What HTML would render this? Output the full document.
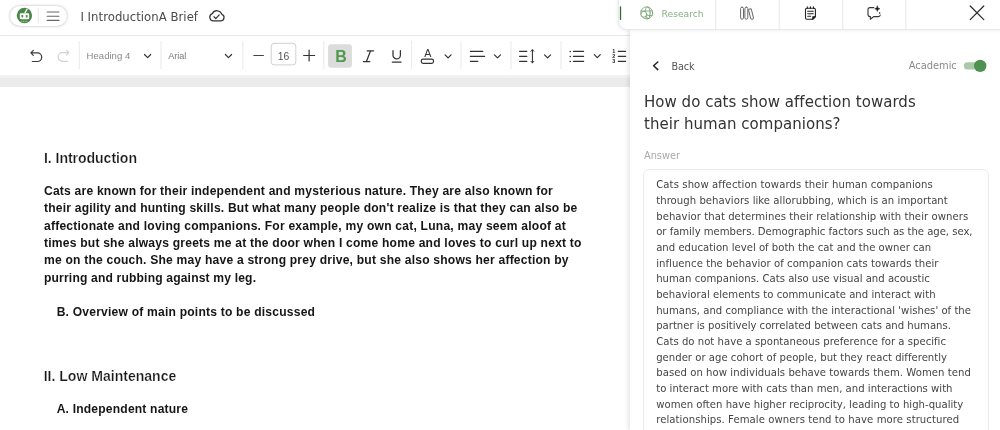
<!DOCTYPE html>
<html><head><meta charset="utf-8">
<style>
*{box-sizing:border-box;margin:0;padding:0}
html,body{width:1000px;height:430px;overflow:hidden;background:#fff;font-family:"Liberation Sans",sans-serif;}
.a{position:absolute}
.t{position:absolute;white-space:nowrap;line-height:normal}
#txt{position:absolute;left:0;top:0;width:1000px;height:430px;will-change:transform}
#top{position:absolute;left:0;top:0;width:1000px;height:36.4px;background:#fff;border-bottom:1px solid #e8e8e8}
#pill{position:absolute;left:10.4px;top:5.6px;width:57px;height:20.8px;border-radius:10.4px;background:#fff;box-shadow:0 0 2.5px .3px rgba(0,0,0,.26)}
#tb{position:absolute;left:0;top:36px;width:1000px;height:39px;background:#fff}
.dv{position:absolute;top:41px;width:1px;height:28px;background:#e9e9e9}
#gray{position:absolute;left:0;top:75px;width:1000px;height:12px;background:linear-gradient(#f3f3f3 0,#f1f1f1 2.9px,#ebebeb 3.1px)}
#doc{position:absolute;left:0;top:87px;width:640px;height:342px;background:#fff}
#tabs{position:absolute;left:617.5px;top:-2px;width:384px;height:31.5px;background:#fff;border:1px solid #e9e9e9;border-radius:0 0 0 9px;box-shadow:-1px 1px 3px rgba(0,0,0,.06)}
.ts{position:absolute;top:0;width:1px;height:29px;background:#ececec}
#panel{position:absolute;left:630px;top:29px;width:370px;height:401px;background:#fff;box-shadow:-2px 0 4px rgba(0,0,0,.10)}
#ansbox{position:absolute;left:642.8px;top:168.8px;width:346.6px;height:280px;border:1.6px solid #ebebeb;border-radius:6px;background:#fff}
svg{position:absolute;overflow:visible}
</style></head><body>
<div id="top"></div>
<div id="pill"></div>
<div id="tb"></div>
<div id="gray"></div>
<div id="doc"></div>
<div id="panel"></div>
<div id="tabs"></div>
<div id="ansbox"></div>
<svg width="1000" height="430" viewBox="0 0 1000 430" style="left:0;top:0;will-change:transform" fill="none" stroke-linecap="round" stroke-linejoin="round">
<!-- logo -->
<g id="logo">
<circle cx="24.45" cy="15.5" r="7.65" fill="#4a874b"/>
<rect x="19.8" y="13.3" width="9.4" height="6" rx="1.3" fill="#fff"/>
<rect x="21.5" y="15.1" width="1.7" height="2.3" rx=".4" fill="#4a874b"/>
<rect x="25.8" y="15.1" width="1.7" height="2.3" rx=".4" fill="#4a874b"/>
<path d="M27.3 8.7 L24.9 12.9" stroke="#fff" stroke-width="1.3" stroke-linecap="butt"/>
<path d="M21.4 21.4 H27.6" stroke="#a9cba9" stroke-width=".9" stroke-dasharray="1.1 .5" stroke-linecap="butt"/>
</g>
<path d="M38.3 7.6 V23.6" stroke="#ebebeb" stroke-width="1.1" stroke-linecap="butt"/>
<path d="M47.2 12 H59 M47.2 16.2 H59 M47.2 20.4 H59" stroke="#666" stroke-width="1.1"/>
<!-- cloud check -->
<path d="M212.9 20.9 A3.8 3.8 0 0 1 212.3 13.6 A5.2 5.2 0 0 1 221.9 14.4 A3.4 3.4 0 0 1 221.2 20.9 Z" stroke="#333" stroke-width="1.25"/>
<path d="M214 16.8 L215.8 18.6 L219.2 14.9" stroke="#333" stroke-width="1.25"/>
<!-- undo / redo -->
<path d="M33.3 50.4 L30.9 52.9 L33.3 55.4 M30.9 52.9 H37.4 A4.3 4.3 0 0 1 37.4 61.5 H32.3" stroke="#3a3a3a" stroke-width="1.2"/>
<path d="M66.4 50.2 L68.8 52.7 L66.4 55.2 M68.8 52.7 H62.4 A4.3 4.3 0 0 0 62.4 61.3 H67.5" stroke="#d2d2d2" stroke-width="1.2"/>
<!-- toolbar dividers -->
<path d="M79.3 41 V69 M161 41 V69 M242.8 41 V69 M323.8 41 V69 M411.5 41 V69 M461 41 V69 M511 41 V69 M561 41 V69" stroke="#ebebeb" stroke-width="1.1" stroke-linecap="butt"/>
<!-- chevrons -->
<g stroke="#333" stroke-width="1.2">
<path d="M144.5 54.5 L147.6 57.6 L150.7 54.5"/>
<path d="M225.4 54.5 L228.5 57.6 L231.6 54.5"/>
<path d="M445.1 54.8 L448.1 57.8 L451.1 54.8"/>
<path d="M494.5 54.8 L497.5 57.8 L500.5 54.8"/>
<path d="M544.6 54.8 L547.6 57.8 L550.6 54.8"/>
<path d="M594.3 54.6 L597.3 57.6 L600.3 54.6"/>
</g>
<!-- minus / box / plus -->
<path d="M253.8 55.5 H263.4" stroke="#444" stroke-width="1.15"/>
<rect x="271.2" y="43.3" width="24.6" height="21.6" rx="3" stroke="#d0d0d0" stroke-width="1" fill="#fff"/>
<path d="M303.6 55.5 H314.6 M309.1 50 V61" stroke="#333" stroke-width="1.2"/>
<!-- B bg -->
<rect x="328.1" y="44.3" width="23.8" height="23.4" rx="3" fill="#dcdcdc"/>
<!-- I -->
<path d="M367.2 50.8 H373.6 M363.4 61.6 H369.8 M370.6 50.8 L366.4 61.6" stroke="#333" stroke-width="1.25"/>
<!-- U -->
<path d="M393 50.6 V55.2 A3.7 3.7 0 0 0 400.4 55.2 V50.6 M392.3 62 H401.1" stroke="#333" stroke-width="1.25"/>
<!-- A box -->
<rect x="421.3" y="59.2" width="12.2" height="4.2" rx="1.8" stroke="#333" stroke-width="1.2"/>
<!-- align -->
<path d="M470.4 51.4 H482.8 M470.4 56.4 H484.6 M470.4 61.4 H477.8" stroke="#333" stroke-width="1.15"/>
<!-- line spacing -->
<path d="M519.6 51.4 H526.8 M519.6 56.4 H526.8 M519.6 61.4 H526.8" stroke="#333" stroke-width="1.15"/>
<path d="M532.4 49.8 V62.8 M531 51.2 L532.4 49.8 L533.8 51.2 M531 61.4 L532.4 62.8 L533.8 61.4" stroke="#222" stroke-width="1"/>
<!-- bullets -->
<path d="M573.4 51.4 H583.6 M573.4 56.4 H583.6 M573.4 61.4 H583.6" stroke="#333" stroke-width="1.15"/>
<path d="M570.2 51.4 h.01 M570.2 56.4 h.01 M570.2 61.4 h.01" stroke="#222" stroke-width="1.5"/>
<!-- numbered -->
<path d="M618.3 51.4 H625.6 M618.3 56.4 H625.6 M618.3 61.4 H625.6" stroke="#333" stroke-width="1.15"/>
</svg>

<svg width="1000" height="430" viewBox="0 0 1000 430" style="left:0;top:0;will-change:transform" fill="none" stroke-linecap="round" stroke-linejoin="round">
<!-- numbered digits -->
<g font-family="Liberation Sans, sans-serif" font-weight="bold" font-size="5.4" fill="#222" stroke="none">
<text x="612.3" y="53.4">1</text><text x="612.3" y="58.4">2</text><text x="612.3" y="63.4">3</text>
</g>
<!-- tab separators -->
<path d="M715.7 0 V29 M779.2 0 V29 M842.7 0 V29 M905.8 0 V29" stroke="#ececec" stroke-width="1.2" stroke-linecap="butt"/>
<!-- active bar -->
<path d="M620.5 6.4 V19.9" stroke="#35693a" stroke-width="1.3" stroke-linecap="butt"/>
<!-- globe search -->
<g stroke="#6b9d6b" stroke-width=".8">
<circle cx="646.7" cy="12.9" r="6"/>
<ellipse cx="647.6" cy="12.9" rx="2.5" ry="6"/>
<path d="M641 11 H652.4 M647 15.4 H652.2"/>
<circle cx="643.9" cy="14.3" r="2.9" fill="#fff"/>
<path d="M645.9 16.2 L648 18.4"/>
</g>
<!-- library -->
<g stroke="#6a6a6a" stroke-width="1">
<rect x="740.6" y="7.2" width="2.9" height="12" rx="1.4"/>
<rect x="744.9" y="7.2" width="2.9" height="12" rx="1.4"/>
<rect x="749.6" y="8.8" width="2.9" height="10.6" rx="1.4" transform="rotate(-14 751 14.1)"/>
</g>
<!-- notepad -->
<g stroke="#222" stroke-width="1.1">
<path d="M812.6 19.3 H807 A1.5 1.5 0 0 1 805.5 17.8 V9.7 A1.5 1.5 0 0 1 807 8.2 H813.9 A1.5 1.5 0 0 1 815.4 9.7 V16.5 Z"/>
<path d="M807.3 6.9 V8.2 M810.4 6.9 V8.2 M813.5 6.9 V8.2"/>
<path d="M807.7 11.2 H813.2 M807.7 13.7 H813.2 M807.7 16.3 H810.6"/>
<path d="M812.8 19.2 V16.8 H815.3 Z" fill="#222"/>
</g>
<!-- chat sparkle -->
<g stroke="#333" stroke-width="1.1">
<path d="M873.8 7.6 H870 A2 2 0 0 0 868 9.6 V14.6 A2 2 0 0 0 870 16.6 H870.4 V19.2 L873.6 16.6 H878.4 A2 2 0 0 0 880.3 15"/>
<path d="M877.3 6 Q877.5 8.6 880 8.8 Q877.5 9 877.3 11.6 Q877.1 9 874.6 8.8 Q877.1 8.6 877.3 6 Z" fill="#111" stroke-width=".5"/>
<circle cx="879.6" cy="13" r=".8" fill="#111" stroke="none"/>
</g>
<!-- close -->
<path d="M970.2 6 L983.8 19.6 M983.8 6 L970.2 19.6" stroke="#2a2a2a" stroke-width="1.2"/>
<!-- back chevron -->
<path d="M657.8 62 L653.6 65.8 L657.8 69.6" stroke="#222" stroke-width="1.5"/>
<!-- toggle -->
<rect x="963.8" y="62.2" width="21" height="7.2" rx="3.6" fill="#a9c9a9"/>
<circle cx="980.2" cy="65.9" r="6.2" fill="#4f9150"/>
</svg>

<div id="txt">
<div class="t" style='left:44.00px;top:150.00px;font-family:"Liberation Sans",sans-serif;font-size:14.08px;color:#1a1a1a;font-weight:bold;letter-spacing:-0.060px;-webkit-text-stroke:.24px #fff;'>I. Introduction</div>
<div class="t" style='left:44.00px;top:183.90px;font-family:"Liberation Sans",sans-serif;font-size:12.1px;color:#161616;font-weight:bold;letter-spacing:0.205px;'>Cats are known for their independent and mysterious nature. They are also known for</div>
<div class="t" style='left:44.00px;top:201.23px;font-family:"Liberation Sans",sans-serif;font-size:12.1px;color:#161616;font-weight:bold;letter-spacing:0.192px;'>their agility and hunting skills. But what many people don't realize is that they can also be</div>
<div class="t" style='left:44.00px;top:218.56px;font-family:"Liberation Sans",sans-serif;font-size:12.1px;color:#161616;font-weight:bold;letter-spacing:0.214px;'>affectionate and loving companions. For example, my own cat, Luna, may seem aloof at</div>
<div class="t" style='left:44.00px;top:235.89px;font-family:"Liberation Sans",sans-serif;font-size:12.1px;color:#161616;font-weight:bold;letter-spacing:0.207px;'>times but she always greets me at the door when I come home and loves to curl up next to</div>
<div class="t" style='left:44.00px;top:253.22px;font-family:"Liberation Sans",sans-serif;font-size:12.1px;color:#161616;font-weight:bold;letter-spacing:0.202px;'>me on the couch. She may have a strong prey drive, but she also shows her affection by</div>
<div class="t" style='left:44.00px;top:270.55px;font-family:"Liberation Sans",sans-serif;font-size:12.1px;color:#161616;font-weight:bold;letter-spacing:0.168px;'>purring and rubbing against my leg.</div>
<div class="t" style='left:56.70px;top:304.90px;font-family:"Liberation Sans",sans-serif;font-size:12.1px;color:#161616;font-weight:bold;letter-spacing:0.202px;'>B. Overview of main points to be discussed</div>
<div class="t" style='left:43.70px;top:368.40px;font-family:"Liberation Sans",sans-serif;font-size:14.08px;color:#1a1a1a;font-weight:bold;letter-spacing:-0.021px;-webkit-text-stroke:.24px #fff;'>II. Low Maintenance</div>
<div class="t" style='left:56.70px;top:401.50px;font-family:"Liberation Sans",sans-serif;font-size:12.1px;color:#161616;font-weight:bold;letter-spacing:0.181px;'>A. Independent nature</div>
<div class="t" style='left:80.40px;top:10.00px;font-family:"DejaVu Sans","Liberation Sans",sans-serif;font-size:11.7px;color:#4a4a4a;letter-spacing:0.028px;'>I IntroductionA Brief</div>
<div class="t" style='left:86.60px;top:50.30px;font-family:"Liberation Sans",sans-serif;font-size:9.56px;color:#8a8a8a;letter-spacing:0.009px;'>Heading 4</div>
<div class="t" style='left:168.20px;top:51.30px;font-family:"Liberation Sans",sans-serif;font-size:9.1px;color:#7a7a7a;letter-spacing:-0.051px;'>Arial</div>
<div class="t" style='left:277.80px;top:50.60px;font-family:"Liberation Sans",sans-serif;font-size:10.4px;color:#555;letter-spacing:-0.163px;'>16</div>
<div class="t" style='left:661.60px;top:8.20px;font-family:"DejaVu Sans","Liberation Sans",sans-serif;font-size:9.2px;color:#86b186;letter-spacing:-0.022px;'>Research</div>
<div class="t" style='left:671.50px;top:61.20px;font-family:"DejaVu Sans","Liberation Sans",sans-serif;font-size:9.7px;color:#555;letter-spacing:-0.144px;'>Back</div>
<div class="t" style='left:908.80px;top:59.60px;font-family:"DejaVu Sans","Liberation Sans",sans-serif;font-size:9.9px;color:#8a8a8a;letter-spacing:-0.029px;'>Academic</div>
<div class="t" style='left:644.00px;top:93.00px;font-family:"DejaVu Sans","Liberation Sans",sans-serif;font-size:15px;color:#333;letter-spacing:0.025px;'>How do cats show affection towards</div>
<div class="t" style='left:644.00px;top:115.40px;font-family:"DejaVu Sans","Liberation Sans",sans-serif;font-size:15px;color:#333;letter-spacing:0.036px;'>their human companions?</div>
<div class="t" style='left:644.00px;top:150.00px;font-family:"DejaVu Sans","Liberation Sans",sans-serif;font-size:9.8px;color:#aaa;letter-spacing:-0.019px;'>Answer</div>
<div class="t" style='left:656.20px;top:179.30px;font-family:"DejaVu Sans","Liberation Sans",sans-serif;font-size:10.1px;color:#444;letter-spacing:0.089px;'>Cats show affection towards their human companions</div>
<div class="t" style='left:656.20px;top:194.96px;font-family:"DejaVu Sans","Liberation Sans",sans-serif;font-size:10.1px;color:#444;letter-spacing:0.045px;'>through behaviors like allorubbing, which is an important</div>
<div class="t" style='left:656.20px;top:210.62px;font-family:"DejaVu Sans","Liberation Sans",sans-serif;font-size:10.1px;color:#444;letter-spacing:0.054px;'>behavior that determines their relationship with their owners</div>
<div class="t" style='left:656.20px;top:226.28px;font-family:"DejaVu Sans","Liberation Sans",sans-serif;font-size:10.1px;color:#444;letter-spacing:-0.032px;'>or family members. Demographic factors such as the age, sex,</div>
<div class="t" style='left:656.20px;top:241.94px;font-family:"DejaVu Sans","Liberation Sans",sans-serif;font-size:10.1px;color:#444;'>and education level of both the cat and the owner can</div>
<div class="t" style='left:656.20px;top:257.60px;font-family:"DejaVu Sans","Liberation Sans",sans-serif;font-size:10.1px;color:#444;letter-spacing:0.042px;'>influence the behavior of companion cats towards their</div>
<div class="t" style='left:656.20px;top:273.26px;font-family:"DejaVu Sans","Liberation Sans",sans-serif;font-size:10.1px;color:#444;letter-spacing:0.012px;'>human companions. Cats also use visual and acoustic</div>
<div class="t" style='left:656.20px;top:288.92px;font-family:"DejaVu Sans","Liberation Sans",sans-serif;font-size:10.1px;color:#444;letter-spacing:0.026px;'>behavioral elements to communicate and interact with</div>
<div class="t" style='left:656.20px;top:304.58px;font-family:"DejaVu Sans","Liberation Sans",sans-serif;font-size:10.1px;color:#444;letter-spacing:0.016px;'>humans, and compliance with the interactional 'wishes' of the</div>
<div class="t" style='left:656.20px;top:320.24px;font-family:"DejaVu Sans","Liberation Sans",sans-serif;font-size:10.1px;color:#444;letter-spacing:-0.004px;'>partner is positively correlated between cats and humans.</div>
<div class="t" style='left:656.20px;top:335.90px;font-family:"DejaVu Sans","Liberation Sans",sans-serif;font-size:10.1px;color:#444;letter-spacing:0.014px;'>Cats do not have a spontaneous preference for a specific</div>
<div class="t" style='left:656.20px;top:351.56px;font-family:"DejaVu Sans","Liberation Sans",sans-serif;font-size:10.1px;color:#444;letter-spacing:0.010px;'>gender or age cohort of people, but they react differently</div>
<div class="t" style='left:656.20px;top:367.22px;font-family:"DejaVu Sans","Liberation Sans",sans-serif;font-size:10.1px;color:#444;letter-spacing:0.051px;'>based on how individuals behave towards them. Women tend</div>
<div class="t" style='left:656.20px;top:382.88px;font-family:"DejaVu Sans","Liberation Sans",sans-serif;font-size:10.1px;color:#444;letter-spacing:0.013px;'>to interact more with cats than men, and interactions with</div>
<div class="t" style='left:656.20px;top:398.54px;font-family:"DejaVu Sans","Liberation Sans",sans-serif;font-size:10.1px;color:#444;letter-spacing:0.007px;'>women often have higher reciprocity, leading to high-quality</div>
<div class="t" style='left:656.20px;top:414.20px;font-family:"DejaVu Sans","Liberation Sans",sans-serif;font-size:10.1px;color:#444;letter-spacing:0.062px;'>relationships. Female owners tend to have more structured</div>
<div class="t" style='left:335.30px;top:47.80px;font-family:"Liberation Sans",sans-serif;font-size:16px;color:#4e9a4e;font-weight:bold;'>B</div>
<div class="t" style='left:424.20px;top:46.90px;font-family:"Liberation Sans",sans-serif;font-size:10.7px;color:#333;'>A</div>
</div>
</body></html>
